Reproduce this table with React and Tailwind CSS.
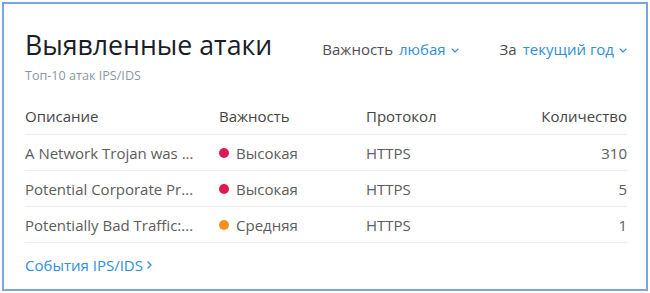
import React from 'react'

const rows = [
  { desc: 'A Network Trojan was ...', level: 'Высокая', dot: 'bg-[#df1a52]', proto: 'HTTPS', count: 310 },
  { desc: 'Potential Corporate Pr...', level: 'Высокая', dot: 'bg-[#df1a52]', proto: 'HTTPS', count: 5 },
  { desc: 'Potentially Bad Traffic:...', level: 'Средняя', dot: 'bg-[#f5921f]', proto: 'HTTPS', count: 1 },
]

function ChevronDown() {
  return (
    <svg className="ml-[5px] mt-[2px] h-[5px] w-[8px]" viewBox="0 0 8 5" fill="none">
      <path d="M1 1l3 3 3-3" stroke="#2f8fd8" strokeWidth="1.1" strokeLinecap="round" strokeLinejoin="round" />
    </svg>
  )
}

function Filter({ label, value }) {
  return (
    <div className="flex items-center text-[15px] leading-[20px]">
      <span className="text-[#4e4e4e]">{label}</span>
      <span className="ml-[6px] text-[#2f8fd8]">{value}</span>
      <ChevronDown />
    </div>
  )
}

export default function App() {
  return (
    <div className="h-[293px] w-[650px] bg-white p-[2px]" style={{ fontFamily: '"Open Sans", "Liberation Sans", sans-serif' }}>
      <div className="h-[289px] border-2 border-[#78a6de] bg-white pl-[21px] pr-[19px] pt-[25px]">
        {/* Заголовок + фильтры */}
        <div className="flex items-baseline">
          <h1 className="text-[26.7px] leading-[32px] text-[#1a1c28]">Выявленные атаки</h1>
          <div className="ml-auto flex items-center gap-[41px]">
            <Filter label="Важность" value="любая" />
            <Filter label="За" value="текущий год" />
          </div>
        </div>
        <p className="mt-[7px] text-[12.6px] leading-[16px] text-[#8b97a4]">Топ-10 атак IPS/IDS</p>

        {/* Таблица */}
        <div className="mt-[22px]">
          <div className="grid h-[29px] grid-cols-[194px_147px_1fr_auto] border-b border-[#ececec] text-[15px] leading-[20px] text-[#454545]">
            <span>Описание</span>
            <span>Важность</span>
            <span>Протокол</span>
            <span className="text-right">Количество</span>
          </div>
          {rows.map((r, i) => (
            <div key={i} className="grid h-[36px] grid-cols-[194px_147px_1fr_auto] items-center border-b border-[#ececec] text-[15px] leading-[20px] text-[#5c5c5c]">
              <span className="whitespace-nowrap">{r.desc}</span>
              <span className="flex items-center">
                <span className={`mr-[7px] h-[10px] w-[10px] rounded-full ${r.dot}`} />
                {r.level}
              </span>
              <span>{r.proto}</span>
              <span className="text-right">{r.count}</span>
            </div>
          ))}
        </div>

        <a className="mt-[12px] flex items-center text-[15px] leading-[20px] text-[#2f8fd8]">
          События IPS/IDS
          <svg className="ml-[4px] h-[8px] w-[5px]" viewBox="0 0 5 8" fill="none">
            <path d="M1 1l3 3-3 3" stroke="#2f8fd8" strokeWidth="1.4" strokeLinecap="round" strokeLinejoin="round" />
          </svg>
        </a>
      </div>
    </div>
  )
}
